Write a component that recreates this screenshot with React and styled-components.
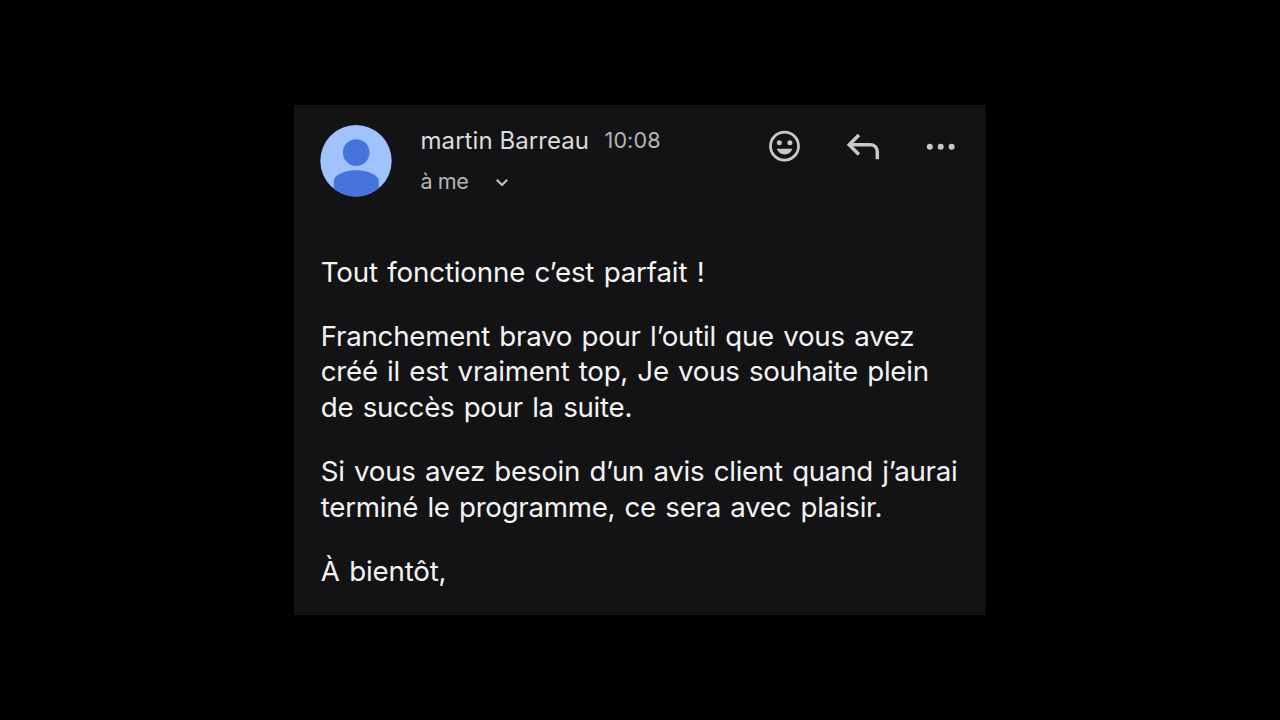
import React from "react";
import styled, { createGlobalStyle } from "styled-components";

const GlobalStyle = createGlobalStyle`
  * { box-sizing: border-box; }
  body { margin: 0; background: #000; }
`;

const Stage = styled.div`
  display: flex;
  width: 1280px;
  height: 720px;
  padding: 105px 295px 105px 294px;
  background: #000;
  font-family: Inter, "Liberation Sans", sans-serif;
`;

const Card = styled.article`
  flex: 1;
  background: #131315;
  box-shadow: 1px 0 0 #0a0a0b;
  padding: 20px 0 0 26px;
`;

const Header = styled.header`
  display: flex;
  height: 129.65px;
`;

const Avatar = styled.svg`
  width: 72px;
  height: 72px;
  flex: none;
`;

const Sender = styled.div`
  width: 330px;
  flex: none;
  padding-top: 1px;
  margin-left: 28.5px;
`;

const SenderRow = styled.div`
  display: flex;
  align-items: flex-start;
  height: ${(p) => p.$height}px;
  line-height: 30px;
`;

const Name = styled.span`
  width: 184px;
  font-size: 24px;
  color: #dcdcdc;
  letter-spacing: 0.07px;
  white-space: nowrap;
`;

const Meta = styled.span`
  font-size: 21.6px;
  color: #b5b5b3;
  letter-spacing: ${(p) => p.$spacing}px;
  line-height: ${(p) => p.$leading}px;
  white-space: nowrap;
`;

const Chevron = styled.svg`
  width: 14px;
  height: 10px;
  margin: 12px 0 0 26.5px;
`;

const Actions = styled.div`
  display: flex;
  gap: 44px;
  padding-top: 4px;
  margin-left: 17px;
`;

const ActionIcon = styled.svg`
  width: 34px;
  height: 34px;
  flex: none;
`;

const Paragraph = styled.p`
  margin: 0 0 28.75px;
  padding-left: 0.8px;
  font-size: 27.7px;
  line-height: 35.5px;
  color: #f4f4f4;
`;

const Line = styled.span`
  display: block;
  white-space: nowrap;
  letter-spacing: ${(p) => p.$spacing}px;
  word-spacing: 1.8px;
`;

const paragraphs = [
  [["Tout fonctionne c’est parfait !", -0.16]],
  [
    ["Franchement bravo pour l’outil que vous avez", -0.26],
    ["créé il est vraiment top, Je vous souhaite plein", -0.27],
    ["de succès pour la suite.", -0.28],
  ],
  [
    ["Si vous avez besoin d’un avis client quand j’aurai", -0.27],
    ["terminé le programme, ce sera avec plaisir.", -0.28],
  ],
  [["À bientôt,", -0.17]],
];

export default function App() {
  return (
    <Stage>
      <GlobalStyle />
      <Card>
        <Header>
          <Avatar viewBox="0 0 72 72">
            <defs>
              <clipPath id="avatar-disc">
                <circle cx="36" cy="35.8" r="35.7" />
              </clipPath>
            </defs>
            <circle cx="36" cy="35.8" r="35.7" fill="#a0c2fd" />
            <circle cx="36.2" cy="27.5" r="13.3" fill="#4673de" />
            <path
              clipPath="url(#avatar-disc)"
              d="M13.8 72V56C13.8 50 25 45.2 36.2 45.2S58.8 50 58.8 56V72Z"
              fill="#4673de"
            />
          </Avatar>
          <Sender>
            <SenderRow $height={40}>
              <Name>martin Barreau</Name>
              <Meta $leading={29} $spacing={0.1}>10:08</Meta>
            </SenderRow>
            <SenderRow $height={30}>
              <Meta $leading={30} $spacing={-0.45}>à me</Meta>
              <Chevron viewBox="0 0 14 10">
                <path d="M1.8 1.8L7 7L12.2 1.8" fill="none" stroke="#c4c4c4" strokeWidth="2" />
              </Chevron>
            </SenderRow>
          </Sender>
          <Actions>
            <ActionIcon viewBox="0 0 34 34">
              <circle cx="16.5" cy="17.2" r="14" fill="none" stroke="#c8c8c8" strokeWidth="2.8" />
              <circle cx="11.3" cy="13.7" r="2.5" fill="#c8c8c8" />
              <circle cx="21.9" cy="13.7" r="2.5" fill="#c8c8c8" />
              <path d="M8.8 19.8H24.4C23.2 23.3 20.3 25.5 16.6 25.5S10 23.3 8.8 19.8Z" fill="#c8c8c8" />
            </ActionIcon>
            <ActionIcon viewBox="0 0 34 34">
              <path
                d="M12.9 6L3.2 15.7L12.9 25.4M3.2 15.7H24.2C28.3 15.7 31.3 18.6 31.3 22.7V30.2"
                fill="none"
                stroke="#c8c8c8"
                strokeWidth="3.5"
              />
            </ActionIcon>
            <ActionIcon viewBox="0 0 34 34">
              <circle cx="5.8" cy="17.8" r="3" fill="#c8c8c8" />
              <circle cx="16.7" cy="17.8" r="3" fill="#c8c8c8" />
              <circle cx="27.6" cy="17.8" r="3" fill="#c8c8c8" />
            </ActionIcon>
          </Actions>
        </Header>
        {paragraphs.map((lines, i) => (
          <Paragraph key={i}>
            {lines.map(([text, spacing]) => (
              <Line key={text} $spacing={spacing}>{text}</Line>
            ))}
          </Paragraph>
        ))}
      </Card>
    </Stage>
  );
}
